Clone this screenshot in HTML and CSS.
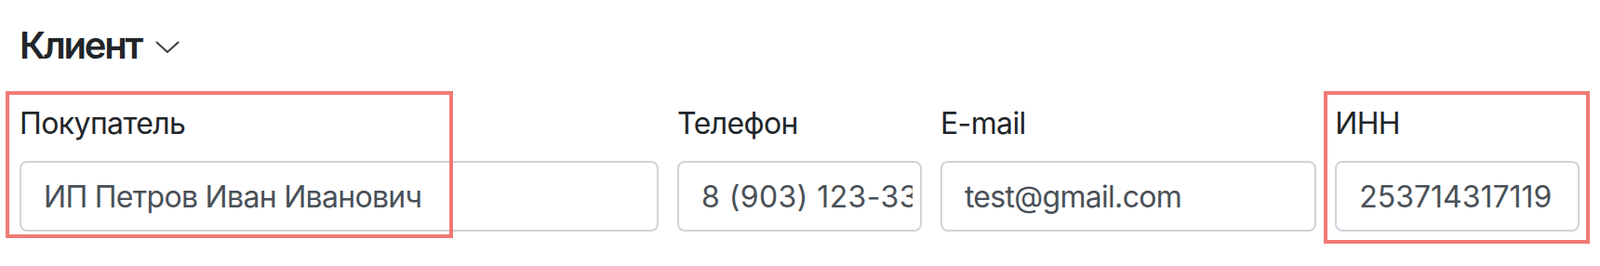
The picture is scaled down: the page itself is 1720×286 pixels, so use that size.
FILE: index.html
```html
<!DOCTYPE html>
<html lang="ru">
<head>
<meta charset="utf-8">
<title>Клиент</title>
<link rel="stylesheet" href="styles.css">
</head>
<body>
<div class="page">
  <h5 class="section-title">
    <span>Клиент</span>
    <svg class="chevron" width="26" height="14" viewBox="0 0 26 14" aria-hidden="true">
      <path d="M1.5 1.5 L13 12 L24.5 1.5" fill="none" stroke="#3a3d42" stroke-width="2" stroke-linecap="round" stroke-linejoin="round"/>
    </svg>
  </h5>
  <div class="form-row">
    <div class="col col-5">
      <label class="field-label">Покупатель</label>
      <input class="form-control" type="text" value="ИП Петров Иван Иванович">
    </div>
    <div class="col col-2">
      <label class="field-label">Телефон</label>
      <input class="form-control phone" type="text" value="8 (903) 123-33-33">
    </div>
    <div class="col col-3">
      <label class="field-label">E-mail</label>
      <input class="form-control" type="text" value="test@gmail.com">
    </div>
    <div class="col col-2">
      <label class="field-label">ИНН</label>
      <input class="form-control digits" type="text" value="253714317119">
    </div>
  </div>
  <div class="highlight hl-buyer"></div>
  <div class="highlight hl-inn"></div>
</div>
</body>
</html>
```

FILE: styles.css
```css
html, body {
  margin: 0;
  padding: 0;
  background: #ffffff;
}

body {
  font-family: Inter, "Noto Sans", "Liberation Sans", sans-serif;
  color: #212529;
}

.page {
  position: relative;
  padding: 25px 22px 0 21px;
  height: 286px;
  box-sizing: border-box;
}

.section-title {
  margin: 0 0 36px;
  display: flex;
  align-items: center;
  gap: 15px;
  font-size: 40px;
  line-height: 48px;
  font-weight: 600;
  letter-spacing: -2.2px;
  color: #212529;
}

.chevron {
  display: block;
  margin-top: 4px;
}

.form-row {
  display: flex;
  margin: 0 -10px;
}

.col {
  box-sizing: border-box;
  padding: 0 10px;
}

.col-5 { flex: 0 0 41.6667%; max-width: 41.6667%; }
.col-3 { flex: 0 0 25%; max-width: 25%; }
.col-2 { flex: 0 0 16.6667%; max-width: 16.6667%; }

.field-label {
  display: block;
  margin-bottom: 16px;
  font-size: 32px;
  line-height: 48px;
  font-weight: 400;
  letter-spacing: -0.6px;
  color: #212529;
}

.form-control {
  display: block;
  width: 100%;
  height: 76px;
  box-sizing: border-box;
  margin: 0;
  padding: 12px 8px 12px 24px;
  font-family: Inter, "Noto Sans", "Liberation Sans", sans-serif;
  font-size: 32px;
  line-height: 48px;
  letter-spacing: -0.7px;
  color: #495057;
  background: #ffffff;
  border: 2px solid #ced4da;
  border-radius: 8px;
  outline: none;
}

.form-control.phone {
  letter-spacing: 0.4px;
}

.form-control.digits {
  letter-spacing: 0;
}

.highlight {
  position: absolute;
  box-sizing: border-box;
  border: 4px solid #f07a74;
  pointer-events: none;
}

.hl-buyer {
  left: 6px;
  top: 98px;
  width: 481px;
  height: 158px;
}

.hl-inn {
  left: 1423px;
  top: 98px;
  width: 286px;
  height: 164px;
}
```
